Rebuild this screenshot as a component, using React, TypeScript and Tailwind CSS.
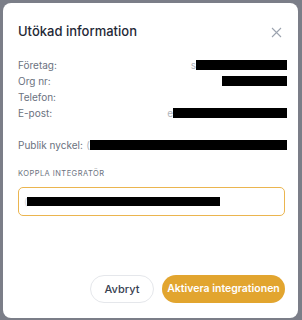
const rows = [
  { label: "Företag:", lead: "s", bar: 91 },
  { label: "Org nr:", lead: "", bar: 65 },
  { label: "Telefon:", lead: "", bar: 0 },
  { label: "E-post:", lead: "e", bar: 114 },
];

function Redacted({ lead, width }: { lead: string; width: number }) {
  if (!width) return null;
  return (
    <span className="flex shrink-0 items-center">
      {lead && <span className="text-[10px] text-[#b0b5bd]">{lead}</span>}
      <span className="h-[10px] bg-black" style={{ width }} />
    </span>
  );
}

export default function App() {
  return (
    <div className="h-[320px] w-[302px] overflow-hidden bg-[#7b7e88] pl-[3px] pt-[3px] font-['Inter',sans-serif]">
      <div className="flex h-[315px] w-[295px] flex-col rounded-[8px] bg-white pl-[15px] pr-[11px] pt-[19px] pb-[15px]">
        <div className="flex h-[20px] items-center justify-between pr-[5px]">
          <h2 className="whitespace-nowrap text-[13px] font-medium text-[#1f2937]">Utökad information</h2>
          <svg width="11" height="11" viewBox="0 0 11 11" className="text-[#9ca3af]">
            <path d="M1 1L10 10M10 1L1 10" stroke="currentColor" strokeWidth="1.1" />
          </svg>
        </div>

        <div className="mt-[15px] flex flex-col">
          {rows.map((r) => (
            <div key={r.label} className="flex h-[16px] items-center justify-between">
              <span className="whitespace-nowrap text-[10px] text-[#6b7280]">{r.label}</span>
              <Redacted lead={r.lead} width={r.bar} />
            </div>
          ))}
        </div>

        <div className="mt-[16px] flex h-[16px] items-center justify-between">
          <span className="shrink-0 whitespace-nowrap text-[10px] text-[#6b7280]">Publik nyckel:</span>
          <Redacted lead="(" width={197} />
        </div>

        <p className="mt-[15px] whitespace-nowrap text-[7.5px] leading-[12px] tracking-[0.06em] text-[#6b7280]">KOPPLA INTEGRATÖR</p>

        <div className="mr-[2px] mt-[7px] flex h-[29px] items-center rounded-[5px] border-[1.5px] border-[#ebb54f] pl-[5px]">
          <span className="text-[9px] text-[#d1d5db]">(</span>
          <span className="h-[9px] w-[193px] bg-black" />
        </div>

        <div className="mr-[2px] mt-auto flex justify-end gap-[8px]">
          <button className="h-[28px] w-[64px] whitespace-nowrap rounded-full border border-[#e5e7eb] bg-white text-[11px] font-medium text-[#374151]">
            Avbryt
          </button>
          <button className="h-[28px] w-[123px] whitespace-nowrap rounded-full bg-[#e2a52f] text-[10.5px] font-semibold text-white">
            Aktivera integrationen
          </button>
        </div>
      </div>
    </div>
  );
}
